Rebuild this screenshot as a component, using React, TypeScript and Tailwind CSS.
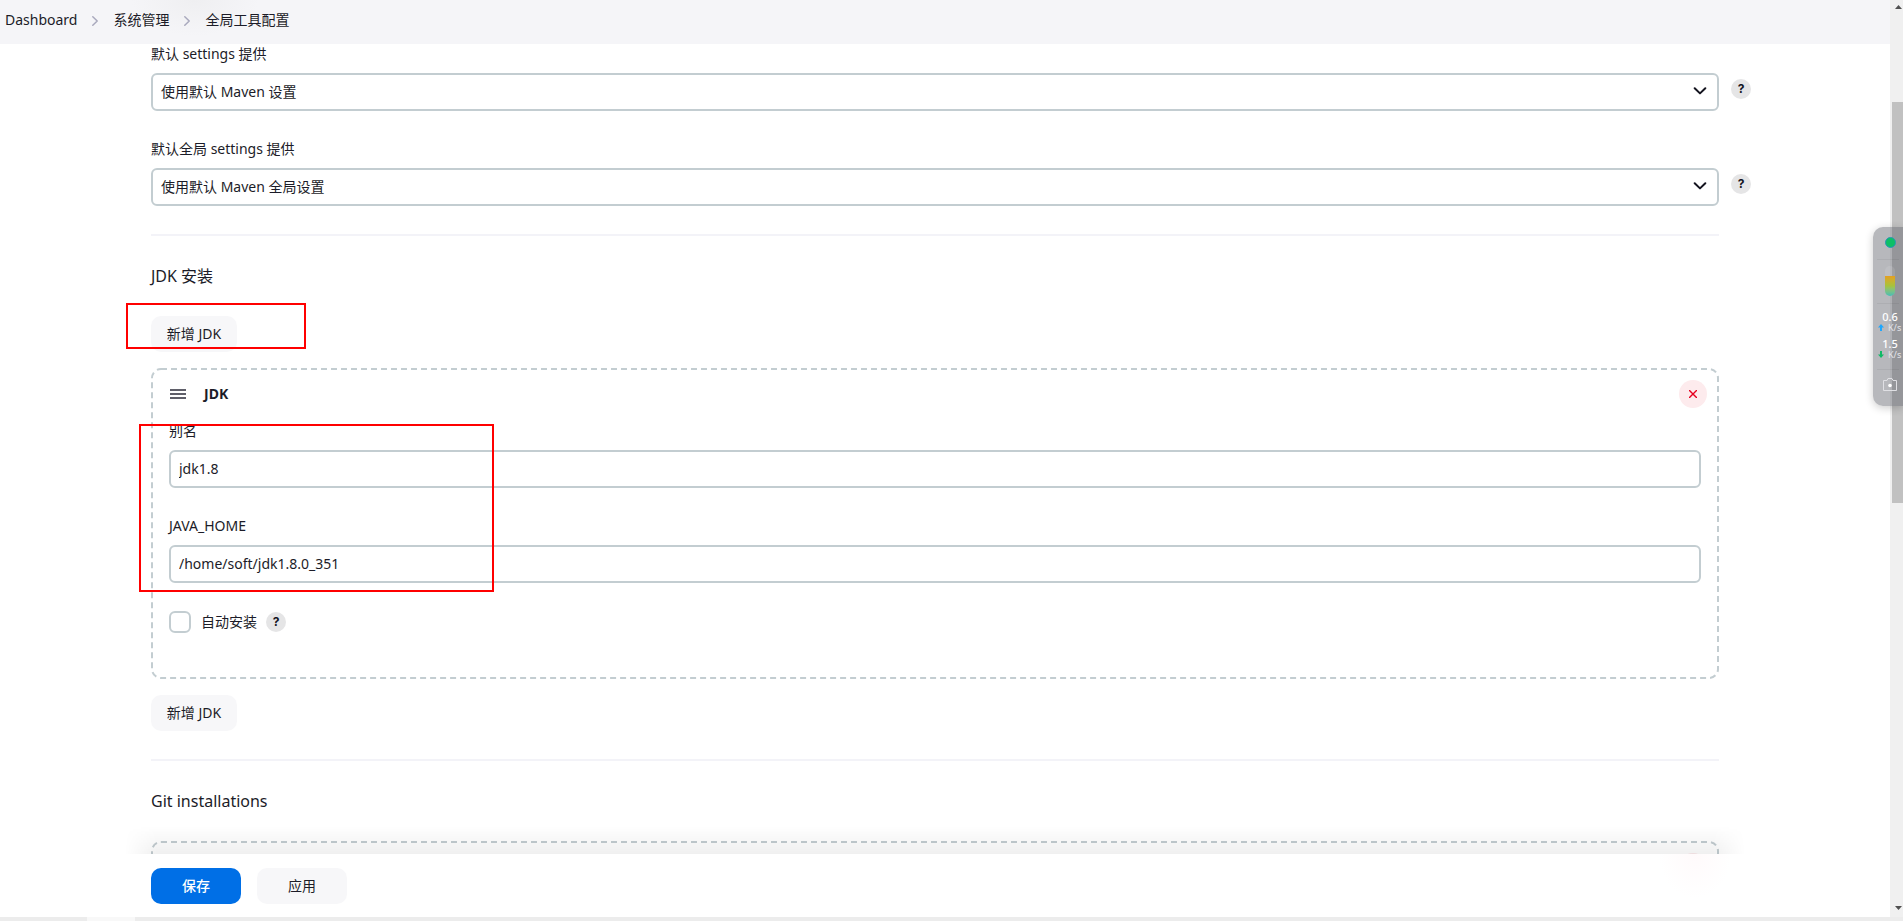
import type { ReactNode } from "react";

function HelpButton({ label }: { label: string }) {
  return (
    <button
      type="button"
      aria-label={label}
      className="flex size-5 shrink-0 items-center justify-center rounded-full bg-[#e5e5e6] font-['Inter',sans-serif] text-[12px] leading-none font-bold text-[#14141f]"
    >
      ?
    </button>
  );
}

function SelectField({ id, label, value }: { id: string; label: string; value: string }) {
  return (
    <div className="mb-7">
      <label htmlFor={id} className="mb-[9px] block h-5 leading-5">
        {label}
      </label>
      <div className="relative">
        <select
          id={id}
          className="block h-[38px] w-full appearance-none rounded-md border-2 border-[#c3cdd1] bg-white px-2 text-[14px]"
        >
          <option>{value}</option>
        </select>
        <svg
          viewBox="0 0 14 8"
          className="pointer-events-none absolute top-[14px] right-3 h-2 w-[14px]"
          fill="none"
          stroke="#14141f"
          strokeWidth="2"
          strokeLinecap="round"
          strokeLinejoin="round"
        >
          <path d="M1.7 1.2 7 6.4l5.3-5.2" />
        </svg>
        <div className="absolute top-[6px] left-full ml-3">
          <HelpButton label={"帮助: " + label} />
        </div>
      </div>
    </div>
  );
}

function TextField({ id, label, value }: { id: string; label: string; value: string }) {
  return (
    <div className="mb-7">
      <label htmlFor={id} className="mb-[9px] block h-5 leading-5">
        {label}
      </label>
      <input
        id={id}
        type="text"
        defaultValue={value}
        className="block h-[38px] w-full rounded-md border-2 border-[#c3cdd1] bg-white px-2 pb-[2px] text-[14px]"
      />
    </div>
  );
}

function SoftButton({ children, className = "" }: { children: ReactNode; className?: string }) {
  return (
    <button
      type="button"
      className={"h-9 rounded-[10px] bg-[#f7f7f9] text-[14px] " + className}
    >
      {children}
    </button>
  );
}

function InstallerBox({ title, children }: { title?: string; children?: ReactNode }) {
  return (
    <div className="relative rounded-[10px]">
      <svg className="pointer-events-none absolute inset-0 size-full" fill="none">
        <rect
          x="1"
          y="1"
          rx="9"
          className="h-[calc(100%-2px)] w-[calc(100%-2px)]"
          stroke="#c3cdd1"
          strokeWidth="2"
          strokeDasharray="6 4"
        />
      </svg>
      <div className="p-[2px]">
        <div className="mb-[3px] flex h-12 items-center pr-[10px] pl-[17px]">
          <svg viewBox="0 0 16 10" className="mr-[18px] h-[10px] w-4" stroke="#2b2b38" strokeWidth="1.6">
            <path d="M0 1h16M0 5h16M0 9h16" />
          </svg>
          <span className="flex-1 font-bold">{title}</span>
          <button
            type="button"
            aria-label="删除"
            className="flex size-7 items-center justify-center rounded-full bg-[#fdebed]"
          >
            <svg viewBox="0 0 8 8" className="size-2" stroke="#e6001f" strokeWidth="1.4">
              <path d="M0 0l8 8M8 0 0 8" />
            </svg>
          </button>
        </div>
        <div className="px-4 pb-[44px]">{children}</div>
      </div>
    </div>
  );
}

function Chevron() {
  return (
    <svg
      viewBox="0 0 6 10"
      className="mx-[15px] mt-[2px] h-[10px] w-[6px]"
      fill="none"
      stroke="#a9a9bd"
      strokeWidth="1.5"
      strokeLinecap="round"
      strokeLinejoin="round"
    >
      <path d="M.8.8 5.2 5 .8 9.2" />
    </svg>
  );
}

function Breadcrumbs() {
  return (
    <nav className="flex h-11 shrink-0 items-center bg-[#f5f5f8] bg-[radial-gradient(ellipse_64px_36px_at_195px_0px,#efeff1,#f5f5f8)] pb-1 pl-[5px]">
      <a href="#dashboard">Dashboard</a>
      <Chevron />
      <a href="#manage">系统管理</a>
      <Chevron />
      <a href="#tools">全局工具配置</a>
    </nav>
  );
}

function Scrollbar() {
  return (
    <div className="flex w-[13px] shrink-0 flex-col items-end bg-[#f0f0f0]">
      <svg viewBox="0 0 7 4" className="mt-[5px] mr-[1px] h-1 w-[7px]" fill="#505050">
        <path d="M0 4 3.5 0 7 4z" />
      </svg>
      <div className="mt-[93px] h-[401px] w-[11px] bg-[#c1c1c1]" />
      <svg viewBox="0 0 7 4" className="mt-auto mr-[1px] mb-[7px] h-1 w-[7px]" fill="#505050">
        <path d="M0 0h7L3.5 4z" />
      </svg>
    </div>
  );
}

function Speed({ value, up }: { value: string; up?: boolean }) {
  return (
    <div className="h-[27px] w-full">
      <div className="pl-1 text-center text-[11px] leading-[10px] font-medium text-white">{value}</div>
      <div className="flex items-center gap-1 pl-[5px] text-[9px] leading-[11px] whitespace-nowrap text-[#e4e4e8]">
        <svg
          viewBox="0 0 6 7"
          className="h-[7px] w-[6px] shrink-0"
          fill={up ? "#1ea7fd" : "#0fb965"}
        >
          {up ? <path d="M3 0 6 3.6H4V7H2V3.6H0z" /> : <path d="M3 7 0 3.4h2V0h2v3.4h2z" />}
        </svg>
        K/s
      </div>
    </div>
  );
}

function NetworkWidget() {
  return (
    <aside className="absolute top-[227px] right-0 flex h-[179px] w-[30px] flex-col items-center overflow-hidden rounded-l-[10px] bg-[#60616b]/45 shadow-[0_2px_8px_rgba(0,0,0,0.2)]">
      <div className="mt-[10px] ml-1 size-[11px] shrink-0 rounded-full border border-[#2d95b5] bg-[#0dbf66]" />
      <div className="mt-[11px] h-px w-[22px] shrink-0 bg-black/5" />
      <div className="mt-[6px] ml-1 h-[30px] w-[10px] shrink-0 overflow-hidden rounded-full bg-white/10 pt-[10px]">
        <div className="h-5 bg-linear-to-b from-[#e39f22] via-[#a5c33c] to-[#43bdb4]" />
      </div>
      <div className="mt-[7px] mb-[8px] h-px w-[22px] shrink-0 bg-black/5" />
      <Speed value="0.6" up />
      <Speed value="1.5" />
      <div className="mt-[3px] h-px w-[22px] shrink-0 bg-black/5" />
      <svg
        viewBox="0 0 14 13"
        className="mt-2 ml-1 h-[13px] w-[14px] shrink-0"
        fill="none"
        stroke="#e0e0e4"
        strokeLinejoin="round"
      >
        <path d="M.5 2.5H4l1-2h4l1 2h3.5v10H.5z" />
        <circle cx="7" cy="7.5" r="1.8" fill="#fff" stroke="none" />
      </svg>
    </aside>
  );
}

export default function App() {
  return (
    <div className="relative flex h-screen flex-col overflow-hidden bg-white font-['Noto_Sans','Noto_Sans_CJK_SC',sans-serif] text-[14px] leading-5 text-[#1c1c28]">
      <div className="flex min-h-0 flex-1">
        <div className="flex min-w-0 flex-1 flex-col">
          <Breadcrumbs />
          <main className="min-h-0 flex-1 overflow-hidden pr-[171px] pl-[151px]">
            <SelectField id="settings" label="默认 settings 提供" value="使用默认 Maven 设置" />
            <SelectField id="global-settings" label="默认全局 settings 提供" value="使用默认 Maven 全局设置" />

            <section className="relative border-t-2 border-[#f3f3f8] pt-7 pb-7">
              <h2 className="mb-7 text-[16px] leading-6">JDK 安装</h2>
              <SoftButton className="mb-4 block w-[86px]">新增 JDK</SoftButton>
              <InstallerBox title="JDK">
                <TextField id="jdk-name" label="别名" value="jdk1.8" />
                <TextField id="java-home" label="JAVA_HOME" value="/home/soft/jdk1.8.0_351" />
                <div className="flex items-center">
                  <input
                    id="auto-install"
                    type="checkbox"
                    className="size-[22px] appearance-none rounded-md border-2 border-[#c3cdd1] bg-white"
                  />
                  <label htmlFor="auto-install" className="mr-[9px] ml-[10px]">
                    自动安装
                  </label>
                  <HelpButton label="帮助: 自动安装" />
                </div>
              </InstallerBox>
              <SoftButton className="mt-4 block w-[86px]">新增 JDK</SoftButton>
              <div className="pointer-events-none absolute top-[67px] -left-[25px] h-[46px] w-[180px] border-2 border-[#ff0000]" />
              <div className="pointer-events-none absolute top-[188px] -left-[12px] h-[168px] w-[355px] border-2 border-[#ff0000]" />
            </section>

            <section className="border-t-2 border-[#f3f3f8] pt-7">
              <h2 className="mb-7 text-[16px] leading-6">Git installations</h2>
              <InstallerBox />
            </section>
          </main>
          <footer className="relative flex h-[63px] shrink-0 gap-4 bg-white bg-[radial-gradient(ellipse_36px_44px_at_1695px_0px,#fffafb,#ffffff)] pt-[14px] pl-[151px]">
            <div className="pointer-events-none absolute right-[145px] bottom-full left-[125px] h-7 bg-linear-to-b from-transparent to-black/6 mask-[linear-gradient(to_right,transparent,black_32px,black_calc(100%-32px),transparent)]" />
            <button
              type="button"
              className="h-9 w-[90px] rounded-[10px] bg-[#006fe6] text-[14px] font-medium text-white"
            >
              保存
            </button>
            <SoftButton className="w-[90px]">应用</SoftButton>
          </footer>
        </div>
        <Scrollbar />
      </div>
      <div className="h-1 shrink-0 bg-[#ececec] pl-[87px]">
        <div className="h-full w-12 bg-[#f8f8f8]" />
      </div>
      <NetworkWidget />
    </div>
  );
}
